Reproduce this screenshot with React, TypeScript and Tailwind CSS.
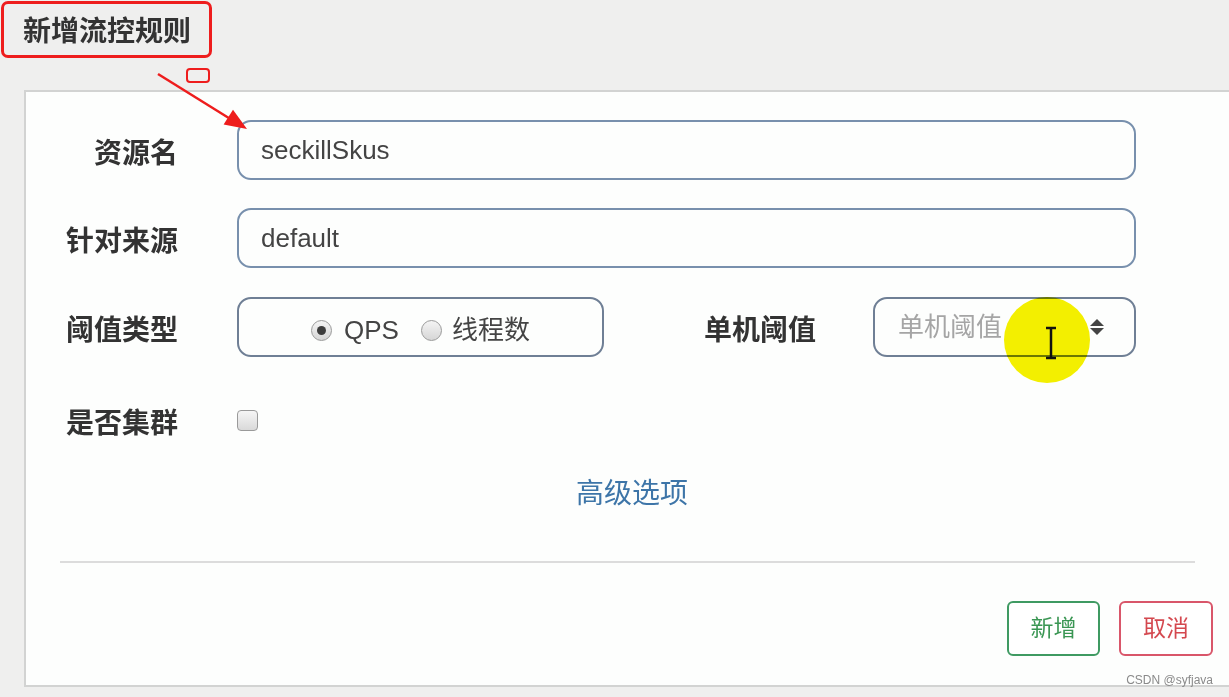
import React from "react";

const Label = ({ text, width = "w-[152px]" }: { text: string; width?: string }) => (
  <div className={`${width} shrink-0 pt-[8px] text-right text-[28px] font-bold text-[#333] leading-none`}>{text}</div>
);

const Radio = ({ checked }: { checked?: boolean }) => (
  <span className="w-[21px] h-[21px] rounded-full border border-[#9a9a9a] bg-gradient-to-b from-[#f4f4f4] to-[#d6d6d6] flex items-center justify-center shrink-0">
    {checked && <span className="w-[9px] h-[9px] rounded-full bg-[#3d3d3d]" />}
  </span>
);

export default function App() {
  return (
    <div className="relative w-[1229px] h-[697px] overflow-hidden bg-[#efefee] font-['Liberation_Sans','Noto_Sans_CJK_SC',sans-serif]">
      {/* header */}
      <div className="h-[90px] pt-[1px] pl-[1px]">
        <div className="w-[211px] h-[57px] border-[3px] border-[#ee1d1d] rounded-[7px] flex items-center pl-[19px] pt-[5px] text-[28px] font-bold text-[#333]">
          新增流控规则
        </div>
      </div>

      {/* panel */}
      <div className="ml-[24px] h-[597px] border-l-2 border-t-2 border-b-2 border-[#d2d3d2] bg-[#fdfefd] pr-[16px]">
        <div className="flex items-center gap-[59px] mt-[28px] h-[60px]">
          <Label text="资源名" />
          <div className="w-[899px] h-[60px] border-2 border-[#7890ad] rounded-[14px] flex items-center pl-[22px] text-[26px] text-[#444]">
            seckillSkus
          </div>
        </div>

        <div className="flex items-center gap-[59px] mt-[28px] h-[60px]">
          <Label text="针对来源" />
          <div className="w-[899px] h-[60px] border-2 border-[#7890ad] rounded-[14px] flex items-center pl-[22px] text-[26px] text-[#444]">
            default
          </div>
        </div>

        <div className="flex items-center mt-[29px] h-[60px]">
          <Label text="阈值类型" />
          <div className="ml-[59px] w-[367px] h-[60px] border-2 border-[#6f7f95] rounded-[14px] flex items-center justify-center pt-[6px] text-[26px] text-[#444]">
            <Radio checked />
            <span className="ml-[12px]">QPS</span>
            <span className="ml-[22px]"><Radio /></span>
            <span className="ml-[10px]">线程数</span>
          </div>
          <Label text="单机阈值" width="w-[212px]" />
          <div className="ml-[57px] w-[263px] h-[60px] border-2 border-[#6f7f95] rounded-[14px] flex items-center pl-[23px] pr-[30px] text-[26px] text-[#a5a5a5]">
            <span className="flex-1">单机阈值</span>
            <span className="flex flex-col items-center gap-[2px]">
              <span className="w-0 h-0 border-l-[7px] border-r-[7px] border-b-[7px] border-l-transparent border-r-transparent border-b-[#444]" />
              <span className="w-0 h-0 border-l-[7px] border-r-[7px] border-t-[7px] border-l-transparent border-r-transparent border-t-[#444]" />
            </span>
          </div>
        </div>

        <div className="flex items-center gap-[59px] mt-[33px] h-[60px]">
          <Label text="是否集群" />
          <span className="w-[21px] h-[21px] rounded-[4px] border border-[#9a9a9a] bg-gradient-to-b from-[#f6f6f6] to-[#d9d9d9]" />
        </div>

        <div className="mt-[24px] h-[36px] flex items-center pl-[550px] pt-[4px] text-[28px] text-[#3d75a8] leading-none">
          高级选项
        </div>

        <div className="mt-[51px] ml-[34px] w-[1135px] h-[2px] bg-[#dcdcdc]" />

        <div className="mt-[38px] flex justify-end gap-[19px]">
          <button className="w-[93px] h-[55px] border-2 border-[#3f9a62] rounded-[6px] bg-white text-[23px] text-[#3a9653]">
            新增
          </button>
          <button className="w-[94px] h-[55px] border-2 border-[#d9566a] rounded-[6px] bg-white text-[23px] text-[#d4484f]">
            取消
          </button>
        </div>
      </div>

      {/* annotations over the screenshot */}
      <div className="absolute left-[186px] top-[68px] w-[24px] h-[15px] border-2 border-[#ee1d1d] rounded-[4px]" />
      <svg className="absolute left-0 top-0 pointer-events-none" width="260" height="140">
        <line x1="158" y1="74" x2="232" y2="120" stroke="#ee1d1d" strokeWidth="2.5" />
        <polygon points="247,129 223.6,124.5 233,109.8" fill="#ee1d1d" />
      </svg>

      <div className="absolute left-[1004px] top-[297px] w-[86px] h-[86px] rounded-full bg-[#f5f000] mix-blend-multiply" />
      <svg className="absolute left-[1043px] top-[326px]" width="16" height="34">
        <line x1="8" y1="2" x2="8" y2="32" stroke="#111" strokeWidth="2.5" />
        <line x1="3" y1="2" x2="13" y2="2" stroke="#111" strokeWidth="2.5" />
        <line x1="3" y1="32" x2="13" y2="32" stroke="#111" strokeWidth="2.5" />
      </svg>

      <div className="absolute right-[16px] top-[674px] text-[12px] text-[#8a8a8a] leading-none">CSDN @syfjava</div>
    </div>
  );
}
